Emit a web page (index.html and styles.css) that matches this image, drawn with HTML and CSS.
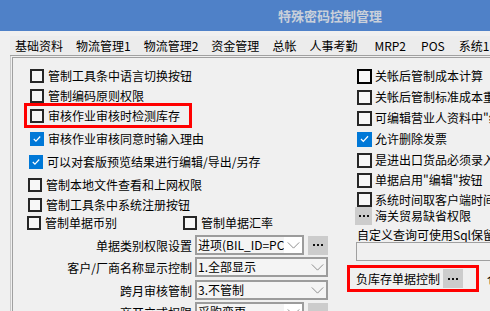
FILE: index.html
```
<!DOCTYPE html>
<html lang="zh-CN">
<head>
<meta charset="utf-8">
<title>特殊密码控制管理</title>
<link rel="stylesheet" href="styles.css">
</head>
<body>
<div class="title">特殊密码控制管理</div>
<div class="tabs">
  <span class="tab">基础资料</span>
  <span class="tab">物流管理1</span>
  <span class="tab">物流管理2</span>
  <span class="tab">资金管理</span>
  <span class="tab">总帐</span>
  <span class="tab">人事考勤</span>
  <span class="tab t-mrp">MRP2</span>
  <span class="tab t-pos">POS</span>
  <span class="tab t-sys">系统1</span>
</div>
<div class="page">
  <div class="frame">
    <div class="left">
      <div class="row l1"><span class="cb"></span>管制工具条中语言切换按钮</div>
      <div class="row l2"><span class="cb"></span>管制编码原则权限</div>
      <div class="redbox rb1"><div class="row"><span class="cb"></span>审核作业审核时检测库存</div></div>
      <div class="row l4"><span class="cb on"><svg viewBox="0 0 14 14"><polyline points="2.5,7 5.5,10 11.5,3.5"/></svg></span>审核作业审核同意时输入理由</div>
      <div class="row l5"><span class="cb on"><svg viewBox="0 0 14 14"><polyline points="2.5,7 5.5,10 11.5,3.5"/></svg></span>可以对套版预览结果进行编辑/导出/另存</div>
      <div class="row l6"><span class="cb"></span>管制本地文件查看和上网权限</div>
      <div class="row l7"><span class="cb"></span>管制工具条中系统注册按钮</div>
      <div class="row l8"><span class="cb"></span><span class="w139">管制单据币别</span><span class="cb"></span>管制单据汇率</div>
      <div class="srow s1"><span class="lbl">单据类别权限设置</span><span class="sel short"><span class="val">进项(BIL_ID=PC</span><span class="arr"><svg viewBox="0 0 14 8"><polyline points="0.5,0.5 7,7 13.5,0.5"/></svg></span></span><span class="dots"><svg viewBox="0 0 10 2"><rect x="0" y="0" width="2" height="2"/><rect x="4" y="0" width="2" height="2"/><rect x="8" y="0" width="2" height="2"/></svg></span></div>
      <div class="srow s2"><span class="lbl">客户/厂商名称显示控制</span><span class="sel long"><span class="val">1.全部显示</span><span class="arr"><svg viewBox="0 0 14 8"><polyline points="0.5,0.5 7,7 13.5,0.5"/></svg></span></span></div>
      <div class="srow s3"><span class="lbl">跨月审核管制</span><span class="sel long"><span class="val">3.不管制</span><span class="arr"><svg viewBox="0 0 14 8"><polyline points="0.5,0.5 7,7 13.5,0.5"/></svg></span></span></div>
      <div class="srow s4"><span class="lbl">商开立式权限</span><span class="sel short"><span class="val">采购变更</span><span class="arr"><svg viewBox="0 0 14 8"><polyline points="0.5,0.5 7,7 13.5,0.5"/></svg></span></span><span class="dots"><svg viewBox="0 0 10 2"><rect x="0" y="0" width="2" height="2"/><rect x="4" y="0" width="2" height="2"/><rect x="8" y="0" width="2" height="2"/></svg></span></div>
    </div>
    <div class="right">
      <div class="row r1"><span class="cb big focus"></span>关帐后管制成本计算</div>
      <div class="row r2"><span class="cb big"></span>关帐后管制标准成本重计</div>
      <div class="row r3"><span class="cb big"></span>可编辑营业人资料中"统一编号"</div>
      <div class="row r4"><span class="cb big on"><svg viewBox="0 0 14 14"><polyline points="2.5,7 5.5,10 11.5,3.5"/></svg></span>允许删除发票</div>
      <div class="row r5"><span class="cb big"></span>是进出口货品必须录入</div>
      <div class="row r6"><span class="cb big"></span>单据启用"编辑"按钮</div>
      <div class="row r7"><span class="cb big"></span>系统时间取客户端时间</div>
      <div class="row r8"><span class="dots small"><svg viewBox="0 0 10 2"><rect x="0" y="0" width="2" height="2"/><rect x="4" y="0" width="2" height="2"/><rect x="8" y="0" width="2" height="2"/></svg></span>海关贸易缺省权限</div>
      <div class="sqlbl">自定义查询可使用Sql保留字</div>
      <div class="input"></div>
      <div class="r9">
        <div class="redbox rb2"><span>负库存单据控制</span><span class="dots"><svg viewBox="0 0 10 2"><rect x="0" y="0" width="2" height="2"/><rect x="4" y="0" width="2" height="2"/><rect x="8" y="0" width="2" height="2"/></svg></span></div>
        <span class="clip">仓</span>
      </div>
    </div>
  </div>
</div>
</body>
</html>
```
FILE: styles.css
```
* { box-sizing: border-box; }
body {
  margin: 0;
  width: 490px;
  height: 311px;
  overflow: hidden;
  background: #f0f0f0;
  font-family: "Noto Sans CJK SC", "Noto Sans", sans-serif;
  font-size: 12px;
  color: #000;
}
.title {
  height: 31px;
  background: #4f81c8;
  color: #c9d0da;
  font-weight: bold;
  font-size: 13px;
  line-height: 31px;
  padding-left: 278px;
}
.tabs {
  margin: 5px 0 0 10px;
  height: 20px;
  display: flex;
  gap: 13px;
  padding-left: 5px;
  border-bottom: 1px solid #a0a0a0;
  white-space: nowrap;
  line-height: 19px;
  background: #ececec;
}
.t-mrp { margin-left: 4px; }
.t-pos { margin-left: 2px; }
.t-sys { margin-left: 1px; }
.page {
  margin-left: 10px;
  border-left: 1px solid #c8c8c8;
  padding: 1px 0 0 1px;
}
.frame {
  border-top: 1px solid #a0a0a0;
  border-left: 1px solid #a0a0a0;
  display: flex;
  height: 260px;
}
.left {
  width: 342px;
  flex: none;
  display: flex;
  flex-direction: column;
}
.right {
  width: 200px;
  flex: none;
  display: flex;
  flex-direction: column;
}
.row {
  display: flex;
  align-items: center;
  height: 20px;
  white-space: nowrap;
  line-height: 20px;
}
.cb {
  flex: none;
  width: 14px;
  height: 14px;
  border: 2px solid #262626;
  background: #f7f7f7;
  margin-right: 4px;
  display: flex;
  align-items: center;
  justify-content: center;
}
.cb.big { width: 15px; height: 15px; margin-right: 3px; }
.cb.focus { border-color: #000; }
.cb.on { background: #0078d7; border-color: #0078d7; }
.cb svg { width: 12px; height: 12px; }
.cb polyline { fill: none; stroke: #fff; stroke-width: 1.6; }

.l1 { margin-top: 8px; padding-left: 17px; }
.l2 { padding-left: 17px; }
.redbox { border: 3px solid #f00; }
.rb1 { margin: -3px 0 0 11px; width: 168px; height: 25px; }
.rb1 .row { height: 19px; padding-left: 3px; }
.l4 { margin-top: 1px; padding-left: 17px; }
.l5 { margin-top: 3px; padding-left: 16px; }
.l6 { margin-top: 3px; padding-left: 15px; }
.l7 { padding-left: 15px; }
.l8 { margin-top: -2px; padding-left: 14px; }
.w139 { width: 138px; flex: none; }

.srow {
  display: flex;
  align-items: center;
  height: 20px;
  white-space: nowrap;
}
.s1 { margin-top: 2px; }
.s2 { margin-top: 2px; }
.s3 { margin-top: 3px; }
.s4 { margin-top: 2px; }
.lbl { width: 179px; text-align: right; margin-right: 3px; flex: none; }
.sel {
  flex: none;
  height: 20px;
  border: 2px solid #9c9c9c;
  background: #f4f4f4;
  display: flex;
  align-items: center;
  overflow: hidden;
}
.sel.short { width: 109px; }
.sel.long { width: 133px; }
.val { flex: 1; overflow: hidden; padding-left: 1px; line-height: 16px; }
.arr {
  flex: none;
  width: 18px;
  height: 16px;
  display: flex;
  align-items: center;
  justify-content: center;
  background: #f4f4f4;
}
.short .arr { background: #fff; }
.arr svg { width: 13px; height: 7px; }
.arr polyline { fill: none; stroke: #808080; stroke-width: 1; }
.dots {
  flex: none;
  width: 20px;
  height: 19px;
  margin-left: 4px;
  background: #cccccc;
  display: flex;
  align-items: center;
  justify-content: center;
}
.dots svg { width: 10px; height: 2px; }
.dots rect { fill: #111; }
.dots.small { width: 17px; height: 18px; margin: 0 3px 0 0; }

.r1 { margin-top: 8px; padding-left: 2px; }
.r2 { margin-top: 1px; padding-left: 2px; }
.r3 { margin-top: 1px; padding-left: 2px; }
.r4 { margin-top: 1px; padding-left: 2px; }
.r5 { margin-top: 1px; padding-left: 2px; }
.r6 { padding-left: 2px; }
.r7 { padding-left: 2px; height: 17px; overflow: hidden; align-items: flex-start; padding-top: 2px; line-height: 15px; }
.r8 { height: 18px; line-height: 18px; }
.sqlbl { margin-top: 3px; height: 14px; line-height: 14px; padding-left: 2px; white-space: nowrap; }
.input {
  margin-left: 1px;
  height: 19px;
  width: 200px;
  border: 1px solid #a0a0a0;
  background: #f0f0f0;
}
.r9 {
  margin: 4px 0 0 -8px;
  display: flex;
  align-items: center;
  white-space: nowrap;
}
.rb2 {
  width: 132px;
  height: 27px;
  display: flex;
  align-items: center;
  padding-left: 6px;
}
.rb2 .dots { margin-left: 3px; }
.clip { margin-left: 8px; }
```
